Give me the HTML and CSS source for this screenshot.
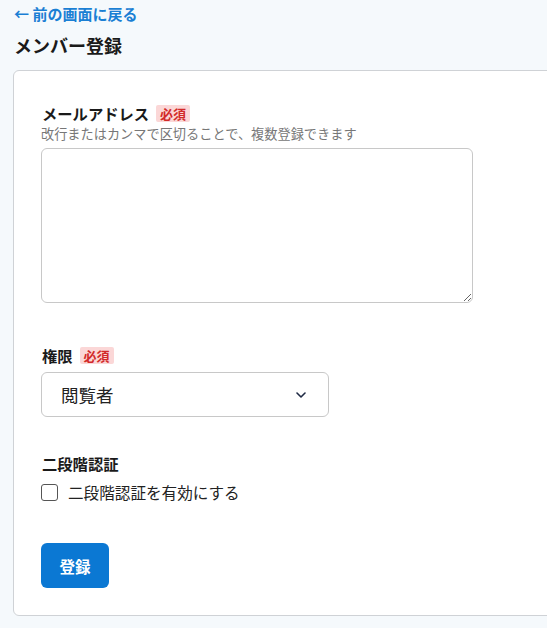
FILE: index.html
```html
<!DOCTYPE html>
<html lang="ja">
<head>
<meta charset="utf-8">
<link rel="stylesheet" href="styles.css">
</head>
<body>
<a class="back" href="#">← 前の画面に戻る</a>
<h1 class="title">メンバー登録</h1>
<div class="card">
  <div class="field">
    <div class="label">メールアドレス <span class="badge">必須</span></div>
    <div class="hint">改行またはカンマで区切ることで、複数登録できます</div>
    <textarea class="textarea"></textarea>
  </div>
  <div class="field field-role">
    <div class="label">権限 <span class="badge">必須</span></div>
    <div class="select">
      <span class="select-text">閲覧者</span>
      <svg class="chevron" width="10" height="6" viewBox="0 0 10 6"><path d="M1 1l4 4 4-4" fill="none" stroke="#1f2a44" stroke-width="1.6" stroke-linecap="round" stroke-linejoin="round"/></svg>
    </div>
  </div>
  <div class="field field-2fa">
    <div class="label">二段階認証</div>
    <label class="check-row"><span class="checkbox"></span><span class="check-text">二段階認証を有効にする</span></label>
  </div>
  <button class="submit">登録</button>
</div>
</body>
</html>
```
FILE: styles.css
```css
html { overflow: hidden; }
body {
  margin: 0;
  padding: 3px 0 0 13px;
  background: #f5f9fc;
  font-family: "Noto Sans CJK JP", "Noto Sans", sans-serif;
  color: #1a1a1a;
  width: 700px;
}
.back {
  display: block;
  font-size: 15px;
  line-height: 22px;
  font-weight: 700;
  color: #1a7fd4;
  text-decoration: none;
  padding-left: 1px;
}
.title {
  margin: 7px 0 0 1px;
  font-size: 18px;
  line-height: 27px;
  font-weight: 700;
}
.card {
  margin-top: 11px;
  width: 600px;
  box-sizing: border-box;
  background: #fff;
  border: 1px solid #cfd2d6;
  border-radius: 6px;
  padding: 31px 27px 27px;
}
.label {
  font-size: 15.3px;
  line-height: 22px;
  font-weight: 700;
  display: flex;
  align-items: center;
  gap: 7px;
  padding-left: 1px;
}
.badge {
  font-size: 13px;
  line-height: 17px;
  padding: 0 4px;
  background: #fbd7d7;
  color: #d22a2a;
  border-radius: 2px;
  font-weight: 700;
}
.hint {
  font-size: 13.2px;
  line-height: 20px;
  color: #777;
}
.textarea {
  display: block;
  margin-top: 4px;
  width: 432px;
  height: 155px;
  box-sizing: border-box;
  border: 1px solid #c8c8c8;
  border-radius: 6px;
  resize: vertical;
}
.field-role { margin-top: 41px; }
.select {
  margin-top: 6px;
  width: 288px;
  height: 45px;
  box-sizing: border-box;
  border: 1px solid #c8c8c8;
  border-radius: 6px;
  display: flex;
  align-items: center;
  justify-content: space-between;
  padding: 0 22px 0 19px;
}
.select-text { font-size: 17.5px; color: #222; }
.field-2fa { margin-top: 35px; }
.check-row {
  display: flex;
  align-items: center;
  gap: 10px;
  margin-top: 7px;
}
.checkbox {
  width: 17px;
  height: 17px;
  box-sizing: border-box;
  border: 1.5px solid #555;
  border-radius: 3px;
}
.check-text { font-size: 15.6px; line-height: 22px; color: #222; }
.submit {
  margin-top: 40px;
  width: 68px;
  height: 45px;
  border: none;
  border-radius: 6px;
  background: #0b78d3;
  color: #fff;
  font-family: inherit;
  font-size: 15.5px;
  font-weight: 700;
}
```
